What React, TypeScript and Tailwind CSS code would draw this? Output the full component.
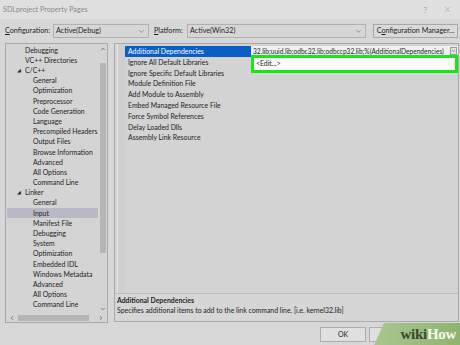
import { ChevronDown, ChevronUp, ChevronLeft, ChevronRight, X } from "lucide-react";

type Node = { label: string; level: 1 | 2; open?: boolean; selected?: boolean };

const tree: Node[] = [
  { label: "Debugging", level: 1 },
  { label: "VC++ Directories", level: 1 },
  { label: "C/C++", level: 1, open: true },
  { label: "General", level: 2 },
  { label: "Optimization", level: 2 },
  { label: "Preprocessor", level: 2 },
  { label: "Code Generation", level: 2 },
  { label: "Language", level: 2 },
  { label: "Precompiled Headers", level: 2 },
  { label: "Output Files", level: 2 },
  { label: "Browse Information", level: 2 },
  { label: "Advanced", level: 2 },
  { label: "All Options", level: 2 },
  { label: "Command Line", level: 2 },
  { label: "Linker", level: 1, open: true },
  { label: "General", level: 2 },
  { label: "Input", level: 2, selected: true },
  { label: "Manifest File", level: 2 },
  { label: "Debugging", level: 2 },
  { label: "System", level: 2 },
  { label: "Optimization", level: 2 },
  { label: "Embedded IDL", level: 2 },
  { label: "Windows Metadata", level: 2 },
  { label: "Advanced", level: 2 },
  { label: "All Options", level: 2 },
  { label: "Command Line", level: 2 },
];

const props = [
  "Additional Dependencies",
  "Ignore All Default Libraries",
  "Ignore Specific Default Libraries",
  "Module Definition File",
  "Add Module to Assembly",
  "Embed Managed Resource File",
  "Force Symbol References",
  "Delay Loaded Dlls",
  "Assembly Link Resource",
];

function Combo({ value, width }: { value: string; width: string }) {
  return (
    <div className={`${width} h-[14px] flex items-center justify-between bg-[#d6d6d6] border border-[#b0b0b0] pl-[2px] pr-[3px]`}>
      <span>{value}</span>
      <ChevronDown size={7} strokeWidth={2} className="text-[#555]" />
    </div>
  );
}

export default function App() {
  return (
    <div
      className="w-[460px] h-[345px] overflow-hidden whitespace-nowrap bg-[#d7d7d7] text-[#1e1e1e] text-[6.9px] leading-none flex flex-col"
      style={{ fontFamily: 'Lato, "Noto Sans", sans-serif' }}
    >
      {/* title bar */}
      <div className="h-[19px] flex items-center justify-between pl-[3px] pr-[8px] bg-[#dfdfdf] text-[#8a8a8a]">
        <span className="text-[7.2px]">SDLproject Property Pages</span>
        <div className="flex items-center gap-[16px] text-[#9a9a9a]">
          <span className="text-[8px]">?</span>
          <X size={9} strokeWidth={1.5} />
        </div>
      </div>

      {/* configuration row */}
      <div className="h-[24px] flex items-center pl-[5px] pr-[2px] text-[7.2px]">
        <span className="w-[48px]">
          <u>C</u>onfiguration:
        </span>
        <Combo value="Active(Debug)" width="w-[96px]" />
        <span className="ml-[5px] w-[33px]">
          <u>P</u>latform:
        </span>
        <Combo value="Active(Win32)" width="w-[179px]" />
        <div className="ml-auto w-[85px] h-[14px] flex items-center justify-center bg-[#d9d9d9] border border-[#a8a8a8]">
          <span>
            C<u>o</u>nfiguration Manager...
          </span>
        </div>
      </div>

      {/* main area */}
      <div className="flex h-[280px] pl-[5px] pr-[1px]">
        {/* tree panel */}
        <div className="w-[103px] border border-[#a9a9a9] bg-[#d4d4d4] flex flex-col">
          <div className="flex flex-1 min-h-0">
            <div className="flex-1 pt-[1px] overflow-hidden">
              {tree.map((n, i) => (
                <div
                  key={i}
                  className={`h-[10.2px] flex items-center ${n.selected ? "bg-[#b9b9c5] mx-[1px]" : ""}`}
                >
                  {n.level === 1 ? (
                    <span className="w-[19px] pl-[11px] text-[5px]">{n.open ? "◢" : ""}</span>
                  ) : null}
                  <span className={n.level === 2 ? (n.selected ? "pl-[26px]" : "pl-[27px]") : ""}>{n.label}</span>
                </div>
              ))}
            </div>
            {/* vertical scrollbar */}
            <div className="w-[8px] flex flex-col items-center pt-[2px] pb-[1px]">
              <ChevronUp size={6} strokeWidth={2.5} className="text-[#444]" />
              <div className="w-[6px] mt-[11px] h-[190px] bg-[#b5b5b5]" />
              <div className="flex-1" />
              <ChevronDown size={6} strokeWidth={2.5} className="text-[#444]" />
            </div>
          </div>
          {/* horizontal scrollbar */}
          <div className="h-[9px] flex items-center px-[3px] gap-[3px]">
            <ChevronLeft size={6} strokeWidth={2.5} className="text-[#444]" />
            <div className="w-[71px] h-[6px] bg-[#b5b5b5]" />
            <div className="flex-1" />
            <ChevronRight size={6} strokeWidth={2.5} className="text-[#444]" />
          </div>
        </div>

        {/* right side */}
        <div className="flex-1 min-w-0 ml-[6px] flex flex-col">
          <div className="h-[251px] border border-[#a9a9a9] bg-[#d3d3d3] flex">
            <div className="w-[3px] border-r border-[#e4e4e4]" />
            <div className="w-[7px] bg-[#cfcfcf]" />
            <div className="flex-1 min-w-0 pt-[2px]">
              {props.map((p, i) => (
                <div key={p} className="h-[10.8px] flex items-center">
                  <div
                    className={`w-[126px] shrink-0 h-full flex items-center pl-[3px] ${
                      i === 0 ? "bg-[#0b5ec6] text-white" : ""
                    }`}
                  >
                    {p}
                  </div>
                  {i === 0 && (
                    <div className="flex-1 min-w-0 h-full flex items-center bg-[#f0f0f0] pl-[2px] pr-[1px]">
                      <span className="flex-1 min-w-0 overflow-hidden text-[6.6px]">
                        32.lib;uuid.lib;odbc32.lib;odbccp32.lib;%(AdditionalDependencies)
                      </span>
                      <span className="ml-[1px] w-[7px] h-[8px] flex items-center justify-center border border-[#9a9a9a] bg-[#e2e2e2] shrink-0">
                        <ChevronDown size={6} strokeWidth={2.5} className="text-[#444]" />
                      </span>
                    </div>
                  )}
                  {i === 1 && (
                    <div className="flex-1 min-w-0 h-[18px] -mt-[2px] self-start border-[3px] border-[#17e617] bg-[#fafafa] flex items-center pl-[2px] relative z-10">
                      &lt;Edit...&gt;
                    </div>
                  )}
                </div>
              ))}
            </div>
          </div>
          {/* description */}
          <div className="h-[29px] mt-[-1px] border border-[#a9a9a9] border-t-[#bdbdbd] bg-[#d6d6d6] px-[2px] pt-[3px] flex flex-col gap-[3px]">
            <span className="font-bold">Additional Dependencies</span>
            <span>Specifies additional items to add to the link command line. [i.e. kernel32.lib]</span>
          </div>
        </div>
      </div>

      {/* buttons */}
      <div className="flex-1 flex items-start pt-[4px] pl-[320px] gap-[3px] relative">
        <div className="w-[46px] h-[15px] flex items-center justify-center bg-[#e0e0e0] border border-[#adadad]">
          OK
        </div>
        <div className="w-[47px] h-[15px] flex items-center justify-center bg-[#e0e0e0] border border-[#adadad]">
          Cancel
        </div>
        {/* watermark */}
        <div
          className="absolute right-0 bottom-0 w-[86px] h-[22px] bg-gradient-to-r from-[#a9c690] to-[#8db56d] flex items-center justify-end pr-[4px]"
          style={{ clipPath: "polygon(10px 0, 100% 0, 100% 100%, 0 100%)" }}
        >
          <span
            className="text-[15px] font-bold tracking-[-0.3px]"
            style={{ fontFamily: '"Liberation Serif", serif' }}
          >
            <span className="text-[#3a4a30]">wiki</span>
            <span className="text-[#f4f8ee]">How</span>
          </span>
        </div>
      </div>
    </div>
  );
}
